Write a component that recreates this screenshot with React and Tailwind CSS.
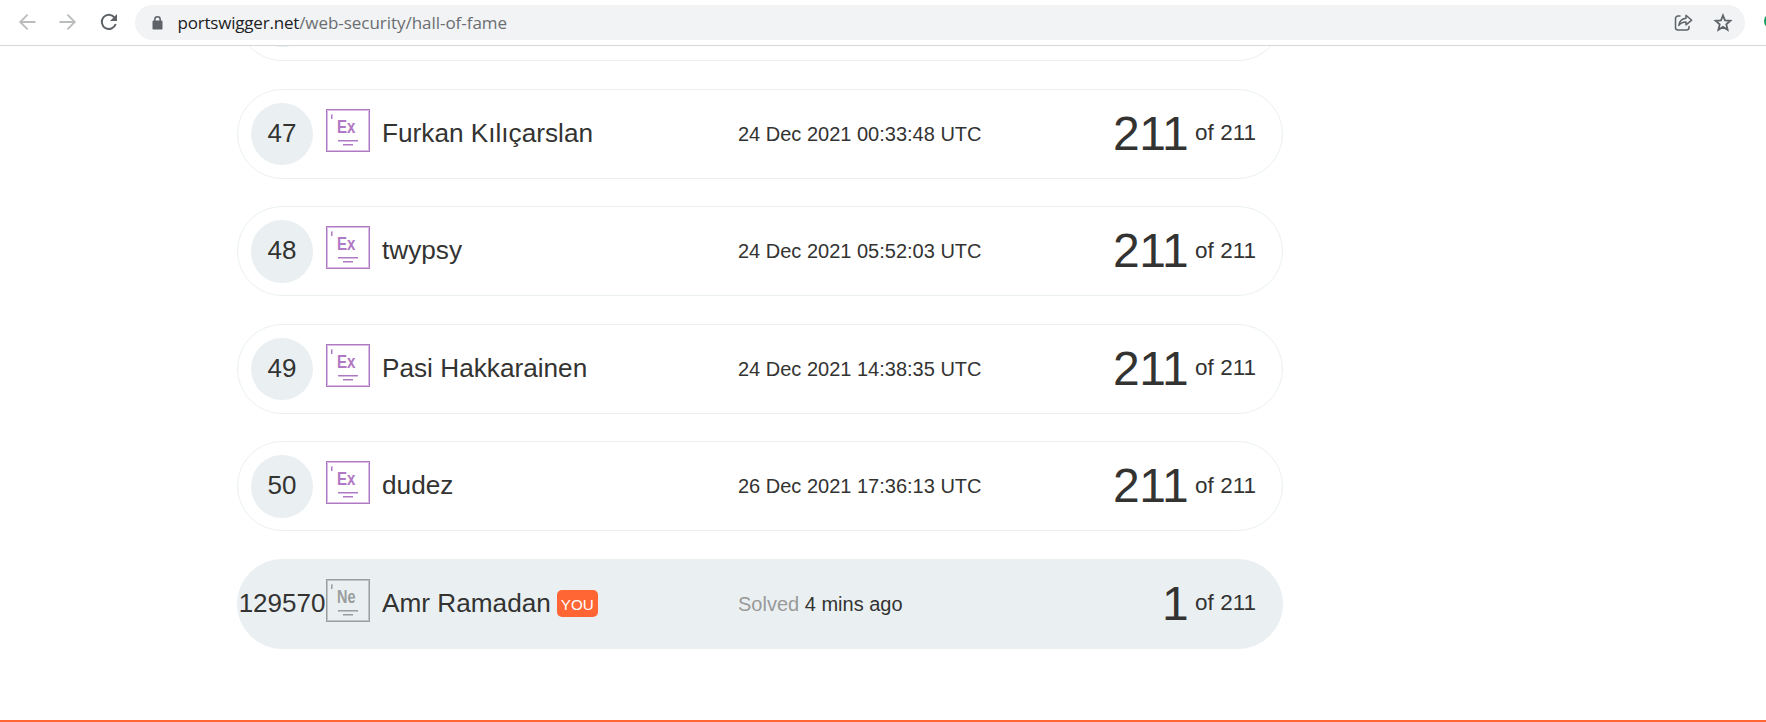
const entries = [
  { rank: '47', name: 'Furkan Kılıçarslan', time: '24 Dec 2021 00:33:48 UTC', solved: '211', level: 'Ex' },
  { rank: '48', name: 'twypsy', time: '24 Dec 2021 05:52:03 UTC', solved: '211', level: 'Ex' },
  { rank: '49', name: 'Pasi Hakkarainen', time: '24 Dec 2021 14:38:35 UTC', solved: '211', level: 'Ex' },
  { rank: '50', name: 'dudez', time: '26 Dec 2021 17:36:13 UTC', solved: '211', level: 'Ex' },
  { rank: '129570', name: 'Amr Ramadan', time: '4 mins ago', solved: '1', level: 'Ne', you: true },
];

function LevelBadge({ level }) {
  const expert = level === 'Ex';
  const main = expert ? '#b079c4' : '#9a9e9e';
  const soft = expert ? '#d9bce3' : '#bfc4c5';
  return (
    <svg width="44" height="43" viewBox="0 0 44 43" className="block shrink-0" shapeRendering="crispEdges">
      <rect x="1.5" y="1.5" width="41" height="40" fill="none" stroke={soft} />
      <rect x="0.5" y="0.5" width="43" height="42" fill="none" stroke={main} />
      <rect x="5" y="5" width="2" height="5" fill={soft} />
      <rect x="5" y="6" width="1" height="4" fill={main} />
      <text x="11" y="24" fill={main} fontFamily="Liberation Sans, Arial, sans-serif" fontWeight="700" fontSize="18" textLength="18.5" lengthAdjust="spacingAndGlyphs">
        {level}
      </text>
      <rect x="12" y="31" width="20" height="1" fill={main} />
      <rect x="12" y="32" width="20" height="1" fill={soft} />
      <rect x="17" y="35" width="10" height="1" fill={main} />
      <rect x="17" y="36" width="10" height="1" fill={soft} />
    </svg>
  );
}

function Row({ rank, name, time, solved, level, you }) {
  return (
    <div className={`flex h-[90px] w-[1046px] shrink-0 items-center rounded-full border border-[#eaf0f2] ${you ? 'bg-[#eaf0f2]' : 'bg-white'}`}>
      <div className="flex w-[88px] shrink-0 justify-center">
        <div className="flex size-[62.5px] items-center justify-center rounded-full bg-[#eaf0f2] pb-[2px] text-[26px] leading-none">
          {rank}
        </div>
      </div>
      <div className="-mt-[7px] shrink-0">
        <LevelBadge level={level} />
      </div>
      <div className="flex w-[368px] shrink-0 items-center pl-[12px] text-[26.2px] leading-none">
        <span className="pb-[2px]">{name}</span>
        {you && (
          <span className="ml-[6px] flex h-[27px] w-[41px] items-center justify-center rounded-[5px] bg-[#ff6633] pt-[2px] text-[15.2px] text-white">
            YOU
          </span>
        )}
      </div>
      <div className="flex-1 pb-[0.4px] text-[20px] leading-none">
        {you && <span className="text-[#999999]">Solved </span>}
        {time}
      </div>
      <div className="flex items-baseline pb-[0.4px] pr-[26px] leading-none">
        <span className="text-[48px] tracking-[-0.5px]">{solved}</span>
        <span className="relative -top-[9.6px] ml-[7px] text-[22.5px]">of 211</span>
      </div>
    </div>
  );
}

function BrowserBar() {
  return (
    <div className="relative z-10 flex h-[46px] shrink-0 items-start border-b border-[#d5d7da] bg-white pt-[5px]">
      <div className="flex h-[35px] w-[135px] shrink-0 items-center pl-[18px]">
        <svg width="18" height="18" viewBox="0 0 18 18" fill="none" stroke="#babcbe" strokeWidth="1.8" className="-mt-[2px]">
          <path d="M17.5 9H2.5M9.6 1.6L2.2 9L9.6 16.4" />
        </svg>
        <svg width="18" height="18" viewBox="0 0 18 18" fill="none" stroke="#babcbe" strokeWidth="1.8" className="-mt-[2px] ml-[23px]">
          <path d="M0.5 9H15.5M8.4 1.6L15.8 9L8.4 16.4" />
        </svg>
        <svg width="18" height="18" viewBox="0 0 18 18" fill="none" className="-mt-px ml-[22.5px]">
          <path d="M14.6 4.6A7.1 7.1 0 1 0 15.7 11" stroke="#5f6368" strokeWidth="2" />
          <path d="M17 1V8H10Z" fill="#5f6368" />
        </svg>
      </div>
      <div className="flex h-[35px] w-[1610px] shrink-0 items-center rounded-full bg-[#f1f3f4] pl-[17px] pr-[12.5px]">
        <svg width="11" height="14" viewBox="0 0 11 14" className="mt-[1px]">
          <path d="M2.8 6V3.5a2.7 2.7 0 0 1 5.4 0V6" fill="none" stroke="#5f6368" strokeWidth="1.5" />
          <rect x="0.5" y="4.6" width="10" height="9" rx="1.2" fill="#5f6368" />
        </svg>
        <div className="ml-[14.5px] flex-1 font-['Open_Sans','Noto_Sans',sans-serif] text-[17px] leading-none tracking-[-0.04px] text-[#6a6d71]">
          <span className="tracking-[-0.2px] text-[#202124]">portswigger.net</span>/web-security/hall-of-fame
        </div>
        <svg width="19" height="18" viewBox="0 0 19 18" fill="none" stroke="#5f6368" strokeWidth="1.5" strokeLinejoin="round">
          <path d="M6.5 2H4A2.5 2.5 0 0 0 1.5 4.5V13.5A2.5 2.5 0 0 0 4 16H12.5A2.5 2.5 0 0 0 15 13.5V12" />
          <path d="M12 1.3L17.7 6.2L12 10.8V8C9 8 6.8 8.6 4.8 11.4C5.2 7.6 7.8 4.7 12 4.2Z" />
        </svg>
        <svg width="20" height="20" viewBox="0 0 20 20" fill="none" stroke="#5f6368" strokeWidth="1.8" className="ml-[20px]">
          <path d="M10 2.5L12 7.4L17.4 7.8L13.3 11.4L14.6 16.8L10 13.9L5.4 16.8L6.7 11.4L2.6 7.8L8 7.4Z" />
        </svg>
      </div>
      <div className="relative flex-1 self-stretch overflow-hidden">
        <div className="absolute left-[18.5px] top-[8px] size-[16px] rounded-full bg-[#0f9d58]" />
      </div>
    </div>
  );
}

export default function App() {
  return (
    <div className="flex h-[722px] w-[1766px] flex-col overflow-hidden bg-white font-['Liberation_Sans',Arial,sans-serif] text-[#333332]">
      <BrowserBar />
      <main className="flex min-h-0 flex-1 flex-col items-start overflow-hidden border-b-2 border-[#ff6633] pl-[237px]">
        <div className="-mt-[74.7px] mb-[28px] flex h-[89.6px] w-[1046px] shrink-0 items-center rounded-full border border-[#eaf0f2] pl-[13px]">
          <div className="size-[62.5px] rounded-full bg-[#eaf0f2]" />
        </div>
        <div className="flex flex-col gap-[27.5px]">
          {entries.map((entry) => (
            <Row key={entry.rank} {...entry} />
          ))}
        </div>
      </main>
    </div>
  );
}
